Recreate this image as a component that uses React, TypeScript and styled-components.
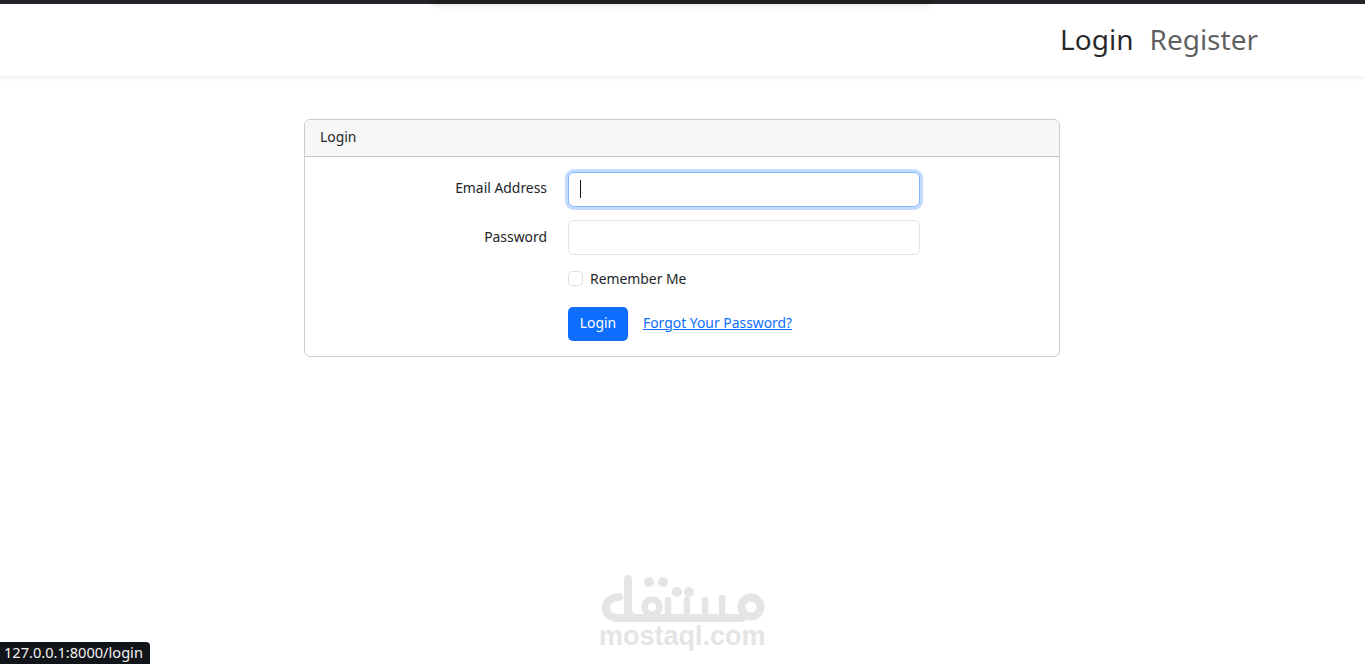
import React from 'react'
import styled, { createGlobalStyle } from 'styled-components'

const GlobalStyle = createGlobalStyle`
    html, body {
        margin: 0;
        height: 100%;
        background: #fff;
    }
    body {
        font-family: "Noto Sans", "Open Sans", sans-serif;
        font-size: 13.9px;
        line-height: 1.5;
        color: #212529;
        overflow: hidden;
    }
    * {
        box-sizing: border-box;
    }
`

const TopStrip = styled.div`
    height: 4px;
    background: #212529;
`
const BrowserPopup = styled.div`
    position: absolute;
    top: 0;
    left: 431px;
    width: 501px;
    height: 3px;
    background: #1e1e1e;
    border-radius: 0 0 6px 6px;
    box-shadow: 0 1px 6px rgba(0, 0, 0, 0.22);
`
const Navbar = styled.nav`
    height: 72px;
    background: #fff;
    display: flex;
    justify-content: flex-end;
    align-items: center;
    gap: 16px;
    padding: 0 107px 2px 0;
    box-shadow: 0 2px 4px rgba(0, 0, 0, 0.075);
`
const NavLink = styled.a<{ $active?: boolean }>`
    font-size: 28px;
    line-height: 40px;
    text-decoration: none;
    color: ${(p) => (p.$active ? 'rgba(0, 0, 0, 0.85)' : 'rgba(0, 0, 0, 0.65)')};
`
const Main = styled.main`
    padding: 43px 1px 0 0;
`
const Card = styled.section`
    width: 756px;
    margin: 0 auto;
    border: 1px solid rgba(0, 0, 0, 0.2);
    border-radius: 6px;
    overflow: hidden;
`
const CardHeader = styled.header`
    height: 37px;
    padding: 0 15px 1px;
    display: flex;
    align-items: center;
    background: #f7f7f7;
    border-bottom: 1px solid rgba(0, 0, 0, 0.2);
`
const CardBody = styled.form`
    display: grid;
    grid-template-columns: 242px 352px;
    column-gap: 21px;
    align-items: center;
    padding: 15px 0;
`
const FieldLabel = styled.label<{ $first?: boolean }>`
    text-align: right;
    margin-bottom: ${(p) => (p.$first ? '16px' : '14px')};
`
const InputWrap = styled.div`
    position: relative;
    height: 34.6px;
    margin-bottom: 13.4px;
`
const TextInput = styled.input<{ $focused?: boolean }>`
    display: block;
    width: 100%;
    height: 100%;
    padding: 0 12px;
    border-radius: 6px;
    outline: none;
    background: #fff;
    border: 1px solid ${(p) => (p.$focused ? '#86b7fe' : '#dee2e6')};
    box-shadow: ${(p) => (p.$focused ? '0 0 0 3px rgba(13, 110, 253, 0.25)' : 'none')};
`
const Caret = styled.span`
    position: absolute;
    left: 12px;
    top: 8px;
    width: 1px;
    height: 18px;
    background: #111;
`
const CheckRow = styled.div`
    grid-column: 2;
    display: flex;
    align-items: center;
    gap: 7px;
    height: 22px;
    margin-bottom: 17px;
`
const CheckBox = styled.span`
    width: 15px;
    height: 15px;
    border: 1px solid #dee2e6;
    border-radius: 4px;
    background: #fff;
`
const ActionRow = styled.div`
    grid-column: 2;
    display: flex;
    align-items: center;
    gap: 15px;
`
const SubmitButton = styled.button`
    width: 60px;
    height: 34px;
    padding: 0 0 2px;
    border: 0;
    border-radius: 5px;
    background: #0d6efd;
    color: #fff;
    font: inherit;
`
const ForgotLink = styled.a`
    color: #0d6efd;
    text-decoration: underline;
    margin-bottom: 2px;
`
const Watermark = styled.div`
    position: absolute;
    left: 590px;
    top: 565px;
    width: 190px;
    height: 95px;
    color: #e5e5e5;
`
const WatermarkText = styled.div`
    position: absolute;
    left: 9px;
    top: 55px;
    font-family: "Liberation Sans", Arial, sans-serif;
    font-weight: 700;
    font-size: 27px;
    line-height: 32px;
`
const StatusBubble = styled.div`
    position: absolute;
    left: 0;
    bottom: 0;
    width: 150px;
    height: 22px;
    padding-left: 4px;
    background: #111418;
    color: #f2f2f2;
    border-radius: 0 4px 0 0;
    font-size: 14.6px;
    line-height: 20px;
`

const MostaqlLogo = () => (
    <svg width="190" height="95" viewBox="0 0 190 95" fill="none" stroke="currentColor" strokeWidth="8" strokeLinecap="round" strokeLinejoin="round">
        <path d="M29 32C21 32 16 37 16 43C16 49 21 53 28 53L152 53" />
        <path d="M38 14L38 44C38 50 41 53 46 53" />
        <circle cx="62" cy="42" r="7.5" strokeWidth="6.5" />
        <path d="M78 35L78 53" strokeWidth="6.5" />
        <path d="M97 35L97 53" strokeWidth="6.5" />
        <path d="M115 35L115 53" strokeWidth="6.5" />
        <path d="M132 33L132 53" strokeWidth="6.5" />
        <circle cx="161" cy="42" r="9.5" />
        <circle cx="59" cy="17" r="5" fill="currentColor" stroke="none" />
        <circle cx="73" cy="17" r="5" fill="currentColor" stroke="none" />
        <circle cx="87" cy="27" r="5" fill="currentColor" stroke="none" />
        <circle cx="99" cy="27" r="5" fill="currentColor" stroke="none" />
    </svg>
)

const App = () => {
    return (
        <>
            <GlobalStyle />
            <TopStrip />
            <BrowserPopup />
            <Navbar>
                <NavLink $active href="#">Login</NavLink>
                <NavLink href="#">Register</NavLink>
            </Navbar>
            <Main>
                <Card>
                    <CardHeader>Login</CardHeader>
                    <CardBody>
                        <FieldLabel $first>Email Address</FieldLabel>
                        <InputWrap>
                            <TextInput $focused readOnly />
                            <Caret />
                        </InputWrap>
                        <FieldLabel>Password</FieldLabel>
                        <InputWrap>
                            <TextInput type="password" readOnly />
                        </InputWrap>
                        <CheckRow>
                            <CheckBox />
                            Remember Me
                        </CheckRow>
                        <ActionRow>
                            <SubmitButton type="button">Login</SubmitButton>
                            <ForgotLink href="#">Forgot Your Password?</ForgotLink>
                        </ActionRow>
                    </CardBody>
                </Card>
            </Main>
            <Watermark>
                <MostaqlLogo />
                <WatermarkText>mostaql.com</WatermarkText>
            </Watermark>
            <StatusBubble>127.0.0.1:8000/login</StatusBubble>
        </>
    )
}

export default App
